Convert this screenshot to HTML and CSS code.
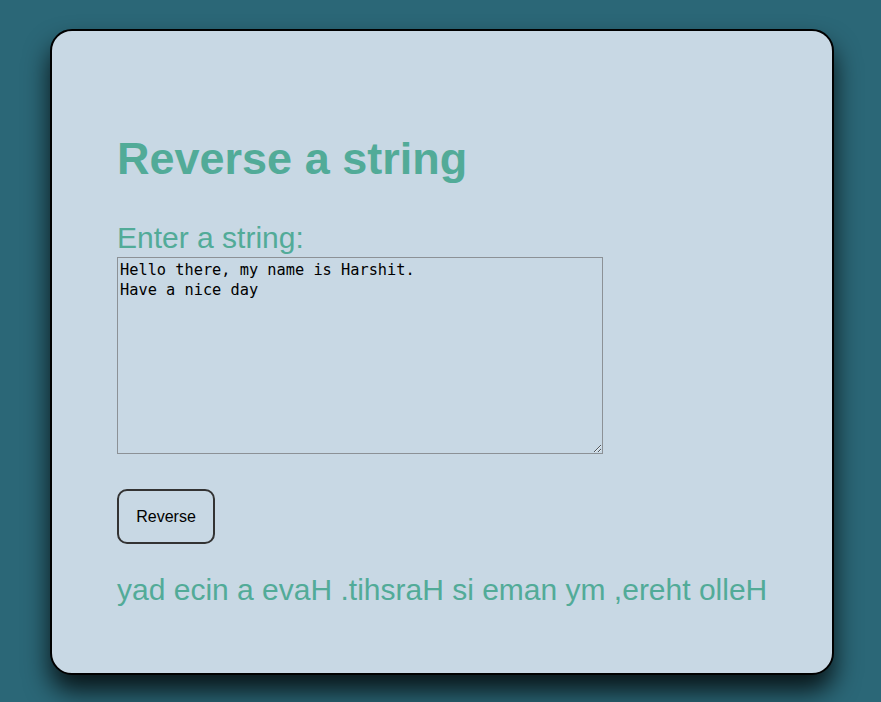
FILE: index.html
```html
<!DOCTYPE html>
<html lang="en">
<head>
<meta charset="utf-8">
<title>Reverse a string</title>
<link rel="stylesheet" href="styles.css">
</head>
<body>
<main class="card">
  <h1 class="title">Reverse a string</h1>
  <label class="label" for="input">Enter a string:</label>
  <textarea id="input" class="input">Hello there, my name is Harshit.
Have a nice day</textarea>
  <button class="btn" type="button">Reverse</button>
  <p class="output">yad ecin a evaH .tihsraH si eman ym ,ereht olleH</p>
</main>
</body>
</html>
```
FILE: styles.css
```css
html, body {
  margin: 0;
  padding: 0;
}
body {
  background: #2b6777;
  font-family: "Liberation Sans", Arial, sans-serif;
  min-height: 702px;
  overflow: hidden;
}
.card {
  box-sizing: border-box;
  width: 784px;
  height: 646px;
  margin: 29px 0 0 50px;
  padding: 102px 0 0 65px;
  background: #c8d8e4;
  border: 2px solid #000;
  border-radius: 22px;
  box-shadow: 0 16px 26px rgba(0, 0, 0, 0.8);
  display: flex;
  flex-direction: column;
  align-items: flex-start;
}
.title {
  margin: 0;
  font-size: 45px;
  line-height: 52px;
  font-weight: bold;
  color: #52ab98;
}
.label {
  margin-top: 36px;
  font-size: 30px;
  line-height: 34px;
  color: #52ab98;
}
.input {
  box-sizing: border-box;
  margin: 2px 0 0 0;
  width: 486px;
  height: 197px;
  padding: 2px;
  border: 1px solid #8c9196;
  background: transparent;
  font-family: "DejaVu Sans Mono", monospace;
  font-size: 15.3px;
  line-height: 20px;
  color: #000;
}
.btn {
  box-sizing: border-box;
  margin-top: 35px;
  width: 98px;
  height: 55px;
  border: 2px solid #333;
  border-radius: 10px;
  background: transparent;
  font-family: "Liberation Sans", Arial, sans-serif;
  font-size: 16px;
  color: #000;
  padding: 0;
}
.output {
  margin: 29px 0 0 0;
  font-size: 30px;
  line-height: 34px;
  color: #52ab98;
}
```
